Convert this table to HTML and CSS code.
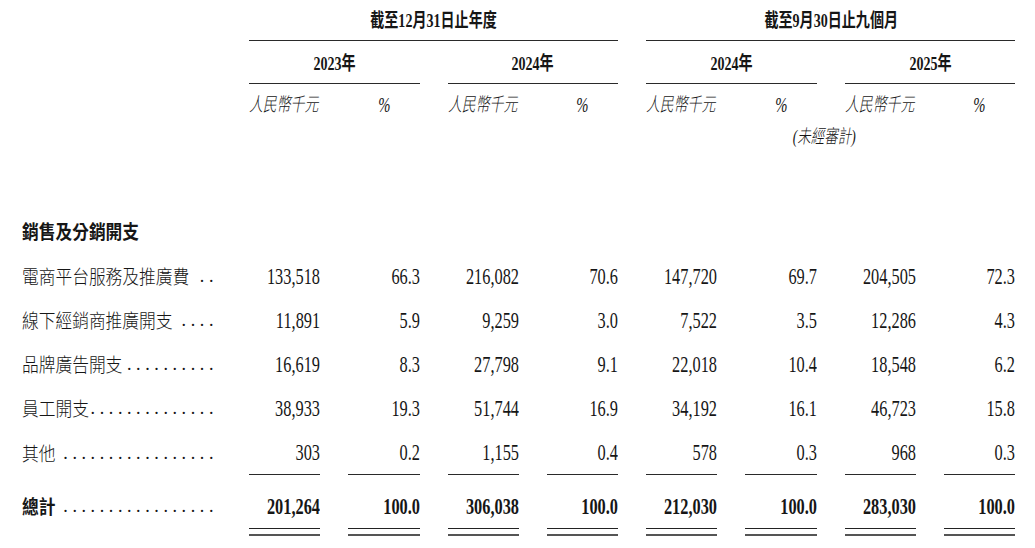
FILE: index.html
```html
<!DOCTYPE html>
<html lang="zh-Hant">
<head>
<meta charset="utf-8">
<title>銷售及分銷開支</title>
<link rel="stylesheet" href="styles.css">
</head>
<body>
<div class="sheet">
  <div class="row grp">
    <div></div>
    <div class="span4 rule"><span class="hd">截至12月31日止年度</span></div>
    <div class="span4 rule"><span class="hd">截至9月30日止九個月</span></div>
  </div>
  <div class="row yr">
    <div></div>
    <div class="span2 rule"><span class="hd">2023年</span></div>
    <div class="span2 rule"><span class="hd">2024年</span></div>
    <div class="span2 rule"><span class="hd">2024年</span></div>
    <div class="span2 rule"><span class="hd">2025年</span></div>
  </div>
  <div class="row unit">
    <div></div>
    <div class="ul-left"><span class="it">人民幣千元</span></div>
    <div class="mid"><span class="it pc">%</span></div>
    <div class="ul-left"><span class="it">人民幣千元</span></div>
    <div class="mid"><span class="it pc">%</span></div>
    <div class="ul-left"><span class="it">人民幣千元</span></div>
    <div class="mid"><span class="it pc">%</span></div>
    <div class="ul-left"><span class="it">人民幣千元</span></div>
    <div class="mid"><span class="it pc">%</span></div>
  </div>
  <div class="row note">
    <div></div>
    <div class="span4"></div>
    <div class="span4 mid audit"><span class="it">(未經審計)</span></div>
  </div>

  <div class="row sec">
    <div class="lab"><span class="h">銷售及分銷開支</span></div>
  </div>

  <div class="row d">
    <div class="lab"><span class="lt">電商平台服務及推廣費</span><span class="dots">..</span></div>
    <div class="num"><span class="n">133,518</span></div>
    <div class="num"><span class="n">66.3</span></div>
    <div class="num"><span class="n">216,082</span></div>
    <div class="num"><span class="n">70.6</span></div>
    <div class="num"><span class="n">147,720</span></div>
    <div class="num"><span class="n">69.7</span></div>
    <div class="num"><span class="n">204,505</span></div>
    <div class="num"><span class="n">72.3</span></div>
  </div>
  <div class="row d">
    <div class="lab"><span class="lt">線下經銷商推廣開支</span><span class="dots">....</span></div>
    <div class="num"><span class="n">11,891</span></div>
    <div class="num"><span class="n">5.9</span></div>
    <div class="num"><span class="n">9,259</span></div>
    <div class="num"><span class="n">3.0</span></div>
    <div class="num"><span class="n">7,522</span></div>
    <div class="num"><span class="n">3.5</span></div>
    <div class="num"><span class="n">12,286</span></div>
    <div class="num"><span class="n">4.3</span></div>
  </div>
  <div class="row d">
    <div class="lab"><span class="lt">品牌廣告開支</span><span class="dots">..........</span></div>
    <div class="num"><span class="n">16,619</span></div>
    <div class="num"><span class="n">8.3</span></div>
    <div class="num"><span class="n">27,798</span></div>
    <div class="num"><span class="n">9.1</span></div>
    <div class="num"><span class="n">22,018</span></div>
    <div class="num"><span class="n">10.4</span></div>
    <div class="num"><span class="n">18,548</span></div>
    <div class="num"><span class="n">6.2</span></div>
  </div>
  <div class="row d">
    <div class="lab"><span class="lt">員工開支</span><span class="dots">..............</span></div>
    <div class="num"><span class="n">38,933</span></div>
    <div class="num"><span class="n">19.3</span></div>
    <div class="num"><span class="n">51,744</span></div>
    <div class="num"><span class="n">16.9</span></div>
    <div class="num"><span class="n">34,192</span></div>
    <div class="num"><span class="n">16.1</span></div>
    <div class="num"><span class="n">46,723</span></div>
    <div class="num"><span class="n">15.8</span></div>
  </div>
  <div class="row d">
    <div class="lab"><span class="lt">其他</span><span class="dots">.................</span></div>
    <div class="num ul"><span class="n">303</span></div>
    <div class="num ul"><span class="n">0.2</span></div>
    <div class="num ul"><span class="n">1,155</span></div>
    <div class="num ul"><span class="n">0.4</span></div>
    <div class="num ul"><span class="n">578</span></div>
    <div class="num ul"><span class="n">0.3</span></div>
    <div class="num ul"><span class="n">968</span></div>
    <div class="num ul"><span class="n">0.3</span></div>
  </div>
  <div class="row t">
    <div class="lab"><span class="h">總計</span><span class="dots">.................</span></div>
    <div class="num tot"><span class="n">201,264</span></div>
    <div class="num tot"><span class="n">100.0</span></div>
    <div class="num tot"><span class="n">306,038</span></div>
    <div class="num tot"><span class="n">100.0</span></div>
    <div class="num tot"><span class="n">212,030</span></div>
    <div class="num tot"><span class="n">100.0</span></div>
    <div class="num tot"><span class="n">283,030</span></div>
    <div class="num tot"><span class="n">100.0</span></div>
  </div>
</div>
</body>
</html>
```

FILE: styles.css
```css
* { box-sizing: border-box; }
html, body { margin: 0; padding: 0; background: #ffffff; }
body {
  font-family: "Liberation Serif", "Noto Sans CJK TC", serif;
  color: #161616;
}
.sheet { width: 1035px; padding-left: 22px; }
.row {
  display: grid;
  grid-template-columns: 199px repeat(8, 71.3px);
  column-gap: 28px;
}
.span4 { grid-column: span 4; }
.span2 { grid-column: span 2; }
.rule { border-bottom: 1.3px solid #2a2a2a; }

.hd {
  display: inline-block;
  font-weight: 700;
  font-size: 19px;
  white-space: nowrap;
  transform: scaleX(0.74);
}
.grp { height: 40px; }
.grp > div { text-align: center; padding-top: 2px; line-height: 37px; }
.yr { height: 42px; }
.yr > div { text-align: center; padding-top: 6px; line-height: 36px; }

.it {
  display: inline-block;
  font-style: italic;
  font-weight: 300;
  font-size: 19px;
  white-space: nowrap;
  transform: scaleX(0.73);
}
.unit { height: 42px; }
.unit > div { padding-top: 4px; line-height: 38px; }
.ul-left .it { transform-origin: left center; }
.mid { text-align: center; }
.pc { font-weight: 400; font-size: 20px; }
.note { height: 26px; line-height: 26px; }
.audit { padding-right: 12px; }
.audit .it { transform: scaleX(0.71); }

.lab {
  display: flex;
  align-items: center;
  white-space: nowrap;
  min-width: 0;
}
.lt, .h {
  flex: 1 1 auto;
  min-width: 0;
  font-family: "Noto Sans CJK TC", sans-serif;
  font-size: 19px;
  transform: scaleX(0.88);
  transform-origin: left center;
}
.lt { font-weight: 300; }
.h { font-weight: 700; }
.dots {
  flex: none;
  font-family: "Liberation Serif", serif;
  font-size: 18px;
  letter-spacing: 4.6px;
  margin-right: 3px;
}

.sec { margin-top: 57px; height: 47px; line-height: 44px; }
.d { height: 44px; line-height: 44px; }
.num {
  display: flex;
  justify-content: flex-end;
  align-items: flex-start;
}
.n {
  flex: none;
  display: block;
  font-size: 24px;
  white-space: nowrap;
  transform: scaleX(0.68);
  transform-origin: right center;
}
.ul { border-bottom: 1.3px solid #2a2a2a; }

.t { height: 62px; }
.t > div { padding-top: 10px; line-height: 44px; align-self: stretch; }
.t .lab { align-items: flex-start; }
.tot {
  font-weight: 700;
  border-bottom: 2px solid #555555;
  background: linear-gradient(#222222, #222222) no-repeat left 0 bottom 5.2px / 100% 1.3px;
}
```
